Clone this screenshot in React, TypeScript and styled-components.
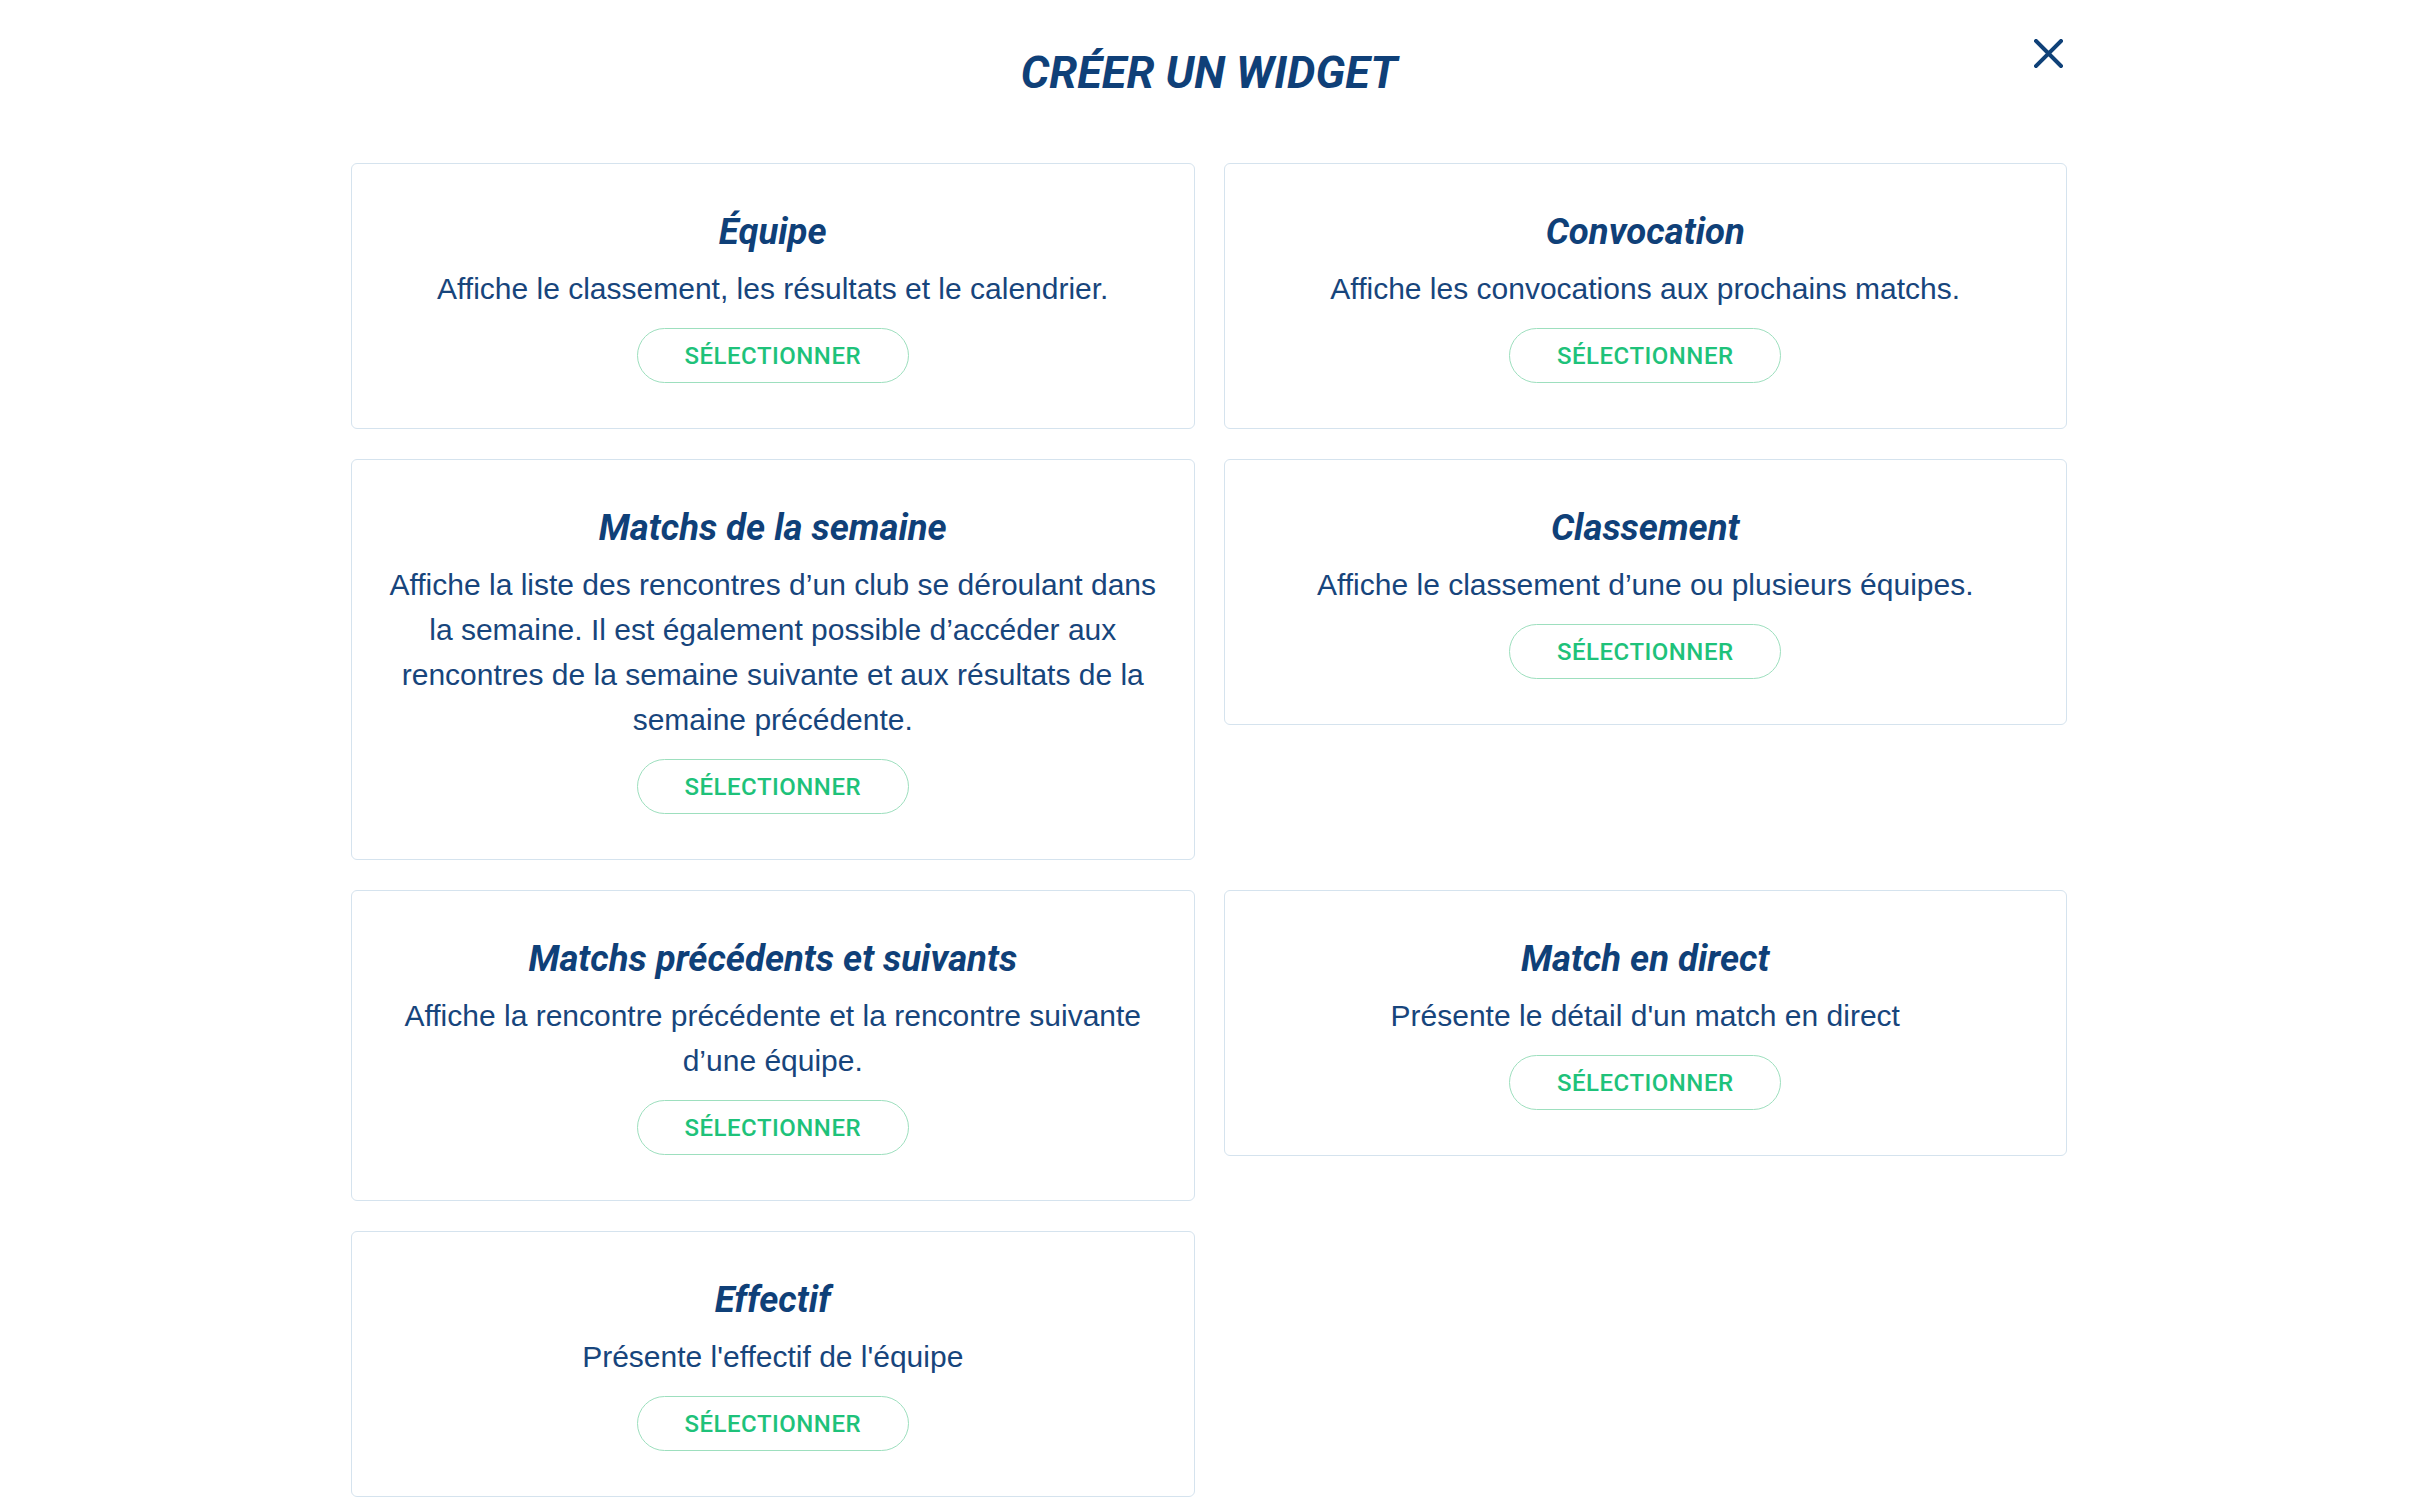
import React from "react";
import styled, { createGlobalStyle } from "styled-components";

const GlobalStyle = createGlobalStyle`
	html, body {
		margin: 0;
		padding: 0;
		background: #ffffff;
	}
	body {
		font-family: "Liberation Sans", Arial, sans-serif;
		color: #17457c;
	}
	* {
		box-sizing: border-box;
	}
`;

const widgets = [
	{ title: "Équipe", desc: "Affiche le classement, les résultats et le calendrier." },
	{ title: "Convocation", desc: "Affiche les convocations aux prochains matchs." },
	{
		title: "Matchs de la semaine",
		desc: "Affiche la liste des rencontres d’un club se déroulant dans la semaine. Il est également possible d’accéder aux rencontres de la semaine suivante et aux résultats de la semaine précédente.",
	},
	{ title: "Classement", desc: "Affiche le classement d’une ou plusieurs équipes." },
	{ title: "Matchs précédents et suivants", desc: "Affiche la rencontre précédente et la rencontre suivante d’une équipe." },
	{ title: "Match en direct", desc: "Présente le détail d'un match en direct" },
	{ title: "Effectif", desc: "Présente l'effectif de l'équipe" },
];

const App: React.FC = () => {
	return (
		<>
			<GlobalStyle />
			<Modal>
				<Header>
					<Title>CRÉER UN WIDGET</Title>
					<CloseButton aria-label="Fermer">
						<svg width="29" height="29" viewBox="0 0 29 29">
							<path d="M2 2 L27 27 M27 2 L2 27" stroke="#0f4178" strokeWidth="4" strokeLinecap="square" fill="none" />
						</svg>
					</CloseButton>
				</Header>
				<Grid>
					{widgets.map((w, i) => (
						<Card key={i}>
							<CardTitle>{w.title}</CardTitle>
							<CardText>{w.desc}</CardText>
							<SelectButton>SÉLECTIONNER</SelectButton>
						</Card>
					))}
				</Grid>
			</Modal>
		</>
	);
};

export default App;

const Modal = styled.div`
	max-width: 1716px;
	margin: 0 auto;
	padding-top: 45px;
`;

const Header = styled.header`
	position: relative;
	text-align: center;
`;

const Title = styled.h1`
	margin: 0;
	font-family: Roboto, "Liberation Sans", sans-serif;
	font-weight: 700;
	font-style: italic;
	font-size: 45px;
	line-height: 55px;
	color: #0f4078;
`;

const CloseButton = styled.button`
	position: absolute;
	top: -6px;
	right: 4px;
	width: 29px;
	height: 29px;
	padding: 0;
	border: none;
	background: none;
	cursor: pointer;

	& > svg {
		display: block;
	}
`;

const Grid = styled.div`
	display: grid;
	grid-template-columns: 1fr 1fr;
	column-gap: 29px;
	row-gap: 30px;
	align-items: start;
	margin-top: 63px;
`;

const Card = styled.div`
	display: flex;
	flex-direction: column;
	align-items: center;
	padding: 47px 28px 45px;
	border: 1px solid #d5e3ee;
	border-radius: 6px;
	text-align: center;
`;

const CardTitle = styled.h2`
	margin: 0;
	font-family: Roboto, "Liberation Sans", sans-serif;
	font-weight: 700;
	font-style: italic;
	font-size: 36.5px;
	line-height: 42px;
	color: #0f4078;
`;

const CardText = styled.p`
	margin: 13px 0 17px;
	font-size: 30px;
	line-height: 45px;
	color: #17457c;
`;

const SelectButton = styled.button`
	width: 272px;
	height: 55px;
	border: 1px solid #9ddfbe;
	border-radius: 28px;
	background: #ffffff;
	color: #1ec27a;
	font-family: Roboto, "Liberation Sans", sans-serif;
	font-weight: 500;
	font-size: 24px;
	letter-spacing: 0.5px;
	cursor: pointer;
`;
